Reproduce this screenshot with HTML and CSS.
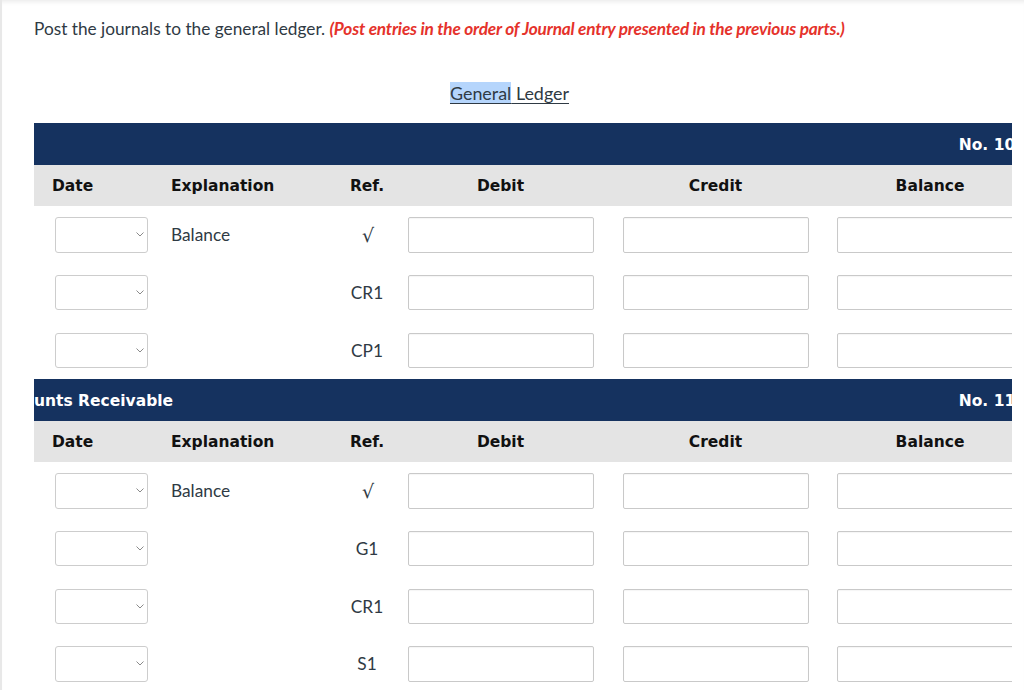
FILE: index.html
```html
<!DOCTYPE html>
<html lang="en">
<head>
<meta charset="utf-8">
<title>General Ledger</title>
<link rel="stylesheet" href="styles.css">
</head>
<body>
<div class="page">
  <p class="intro">Post the journals to the general ledger. <em class="note">(Post entries in the order of Journal entry presented in the previous parts.)</em></p>
  <h2 class="gl-title"><span class="gl-text"><span class="sel">General</span> Ledger</span></h2>

  <div class="viewport">
    <div class="ledger">
      <div class="acct-head"><span class="acct-name"></span><span class="acct-no">No. 101</span></div>
      <div class="cols">
        <div class="c-date">Date</div><div class="c-expl">Explanation</div><div class="c-mid">Ref.</div><div class="c-mid">Debit</div><div class="c-mid">Credit</div><div class="c-mid">Balance</div>
      </div>
      <div class="row">
        <div class="date-pick"><select aria-label="Date"><option></option></select><svg class="chev" width="8" height="5" viewBox="0 0 8 5"><polyline points="0.5,0.5 4,4 7.5,0.5" fill="none" stroke="#8a8a8a" stroke-width="1"/></svg></div>
        <div class="expl">Balance</div><div class="ref check">√</div>
        <input class="amount" type="text" aria-label="Debit"><input class="amount" type="text" aria-label="Credit"><input class="amount" type="text" aria-label="Balance">
      </div>
      <div class="row">
        <div class="date-pick"><select aria-label="Date"><option></option></select><svg class="chev" width="8" height="5" viewBox="0 0 8 5"><polyline points="0.5,0.5 4,4 7.5,0.5" fill="none" stroke="#8a8a8a" stroke-width="1"/></svg></div>
        <div class="expl"></div><div class="ref">CR1</div>
        <input class="amount" type="text" aria-label="Debit"><input class="amount" type="text" aria-label="Credit"><input class="amount" type="text" aria-label="Balance">
      </div>
      <div class="row">
        <div class="date-pick"><select aria-label="Date"><option></option></select><svg class="chev" width="8" height="5" viewBox="0 0 8 5"><polyline points="0.5,0.5 4,4 7.5,0.5" fill="none" stroke="#8a8a8a" stroke-width="1"/></svg></div>
        <div class="expl"></div><div class="ref">CP1</div>
        <input class="amount" type="text" aria-label="Debit"><input class="amount" type="text" aria-label="Credit"><input class="amount" type="text" aria-label="Balance">
      </div>

      <div class="acct-head"><span class="acct-name shifted">Accounts Receivable</span><span class="acct-no">No. 112</span></div>
      <div class="cols">
        <div class="c-date">Date</div><div class="c-expl">Explanation</div><div class="c-mid">Ref.</div><div class="c-mid">Debit</div><div class="c-mid">Credit</div><div class="c-mid">Balance</div>
      </div>
      <div class="row">
        <div class="date-pick"><select aria-label="Date"><option></option></select><svg class="chev" width="8" height="5" viewBox="0 0 8 5"><polyline points="0.5,0.5 4,4 7.5,0.5" fill="none" stroke="#8a8a8a" stroke-width="1"/></svg></div>
        <div class="expl">Balance</div><div class="ref check">√</div>
        <input class="amount" type="text" aria-label="Debit"><input class="amount" type="text" aria-label="Credit"><input class="amount" type="text" aria-label="Balance">
      </div>
      <div class="row">
        <div class="date-pick"><select aria-label="Date"><option></option></select><svg class="chev" width="8" height="5" viewBox="0 0 8 5"><polyline points="0.5,0.5 4,4 7.5,0.5" fill="none" stroke="#8a8a8a" stroke-width="1"/></svg></div>
        <div class="expl"></div><div class="ref">G1</div>
        <input class="amount" type="text" aria-label="Debit"><input class="amount" type="text" aria-label="Credit"><input class="amount" type="text" aria-label="Balance">
      </div>
      <div class="row">
        <div class="date-pick"><select aria-label="Date"><option></option></select><svg class="chev" width="8" height="5" viewBox="0 0 8 5"><polyline points="0.5,0.5 4,4 7.5,0.5" fill="none" stroke="#8a8a8a" stroke-width="1"/></svg></div>
        <div class="expl"></div><div class="ref">CR1</div>
        <input class="amount" type="text" aria-label="Debit"><input class="amount" type="text" aria-label="Credit"><input class="amount" type="text" aria-label="Balance">
      </div>
      <div class="row">
        <div class="date-pick"><select aria-label="Date"><option></option></select><svg class="chev" width="8" height="5" viewBox="0 0 8 5"><polyline points="0.5,0.5 4,4 7.5,0.5" fill="none" stroke="#8a8a8a" stroke-width="1"/></svg></div>
        <div class="expl"></div><div class="ref">S1</div>
        <input class="amount" type="text" aria-label="Debit"><input class="amount" type="text" aria-label="Credit"><input class="amount" type="text" aria-label="Balance">
      </div>
    </div>
  </div>
</div>
</body>
</html>
```
FILE: styles.css
```css
html, body {
  margin: 0;
  padding: 0;
  background: #ffffff;
}

body {
  font-family: Lato, "Noto Sans", sans-serif;
  color: #2f3a44;
}

.page {
  box-sizing: border-box;
  height: 690px;
  overflow: hidden;
  border-left: 2px solid #e8e8e8;
  padding: 17px 0 0 32px;
  box-shadow: inset 0 5px 4px -3px rgba(0, 0, 0, 0.08);
}

.intro {
  margin: 0;
  font-size: 17.25px;
  line-height: 24px;
}

.note {
  color: #e5322b;
  font-weight: 700;
  font-style: italic;
  letter-spacing: -0.2px;
}

.gl-title {
  margin: 40px 0 0;
  padding-right: 39px;
  font-size: 17.9px;
  font-weight: 400;
  line-height: 24px;
  text-align: center;
}

.gl-text {
  text-decoration: underline;
  text-underline-offset: 3px;
}

.sel {
  background: #b5d5fc;
}

.viewport {
  margin-top: 18px;
  width: 978px;
  overflow: hidden;
}

.ledger {
  width: 1003px;
}

.acct-head {
  box-sizing: border-box;
  height: 41.5px;
  background: #15325f;
  color: #ffffff;
  display: flex;
  justify-content: space-between;
  align-items: center;
  padding: 2px 11px 0 0;
  font-family: "DejaVu Sans", Verdana, sans-serif;
  font-weight: 700;
  font-size: 15.5px;
}

.acct-name.shifted {
  margin-left: -41px;
}

.cols,
.row {
  display: grid;
  grid-template-columns: 126px 181px 52px 215px 215px 214px;
  align-items: center;
}

.cols {
  box-sizing: border-box;
  height: 41.5px;
  padding-top: 2px;
  background: #e4e4e4;
  color: #111111;
  font-family: "DejaVu Sans", Verdana, sans-serif;
  font-weight: 700;
  font-size: 15.5px;
}

.c-date {
  padding-left: 18px;
}

.c-expl {
  padding-left: 11px;
}

.c-mid {
  text-align: center;
}

.row {
  height: 57.7px;
  font-size: 17.3px;
}

.date-pick {
  display: grid;
  margin-left: 21px;
  width: 93px;
  height: 35.4px;
}

.date-pick select {
  grid-area: 1 / 1;
  appearance: none;
  -webkit-appearance: none;
  margin: 0;
  width: 100%;
  height: 100%;
  box-sizing: border-box;
  border: 1px solid #cdcdcd;
  border-radius: 3px;
  background: #ffffff;
  font: inherit;
}

.chev {
  grid-area: 1 / 1;
  justify-self: end;
  align-self: center;
  margin-right: 4px;
  pointer-events: none;
}

.expl {
  padding-left: 11px;
}

.ref {
  text-align: center;
}

.ref.check {
  font-family: "DejaVu Sans", sans-serif;
  font-size: 19px;
  line-height: 20px;
  padding-left: 2px;
}

.amount {
  justify-self: center;
  box-sizing: border-box;
  width: 186px;
  height: 35.4px;
  margin: 0;
  border: 1px solid #c9c9c9;
  border-radius: 2px;
  background: #ffffff;
  box-shadow: inset 0 1px 1px rgba(0, 0, 0, 0.04);
  font: inherit;
}
```
